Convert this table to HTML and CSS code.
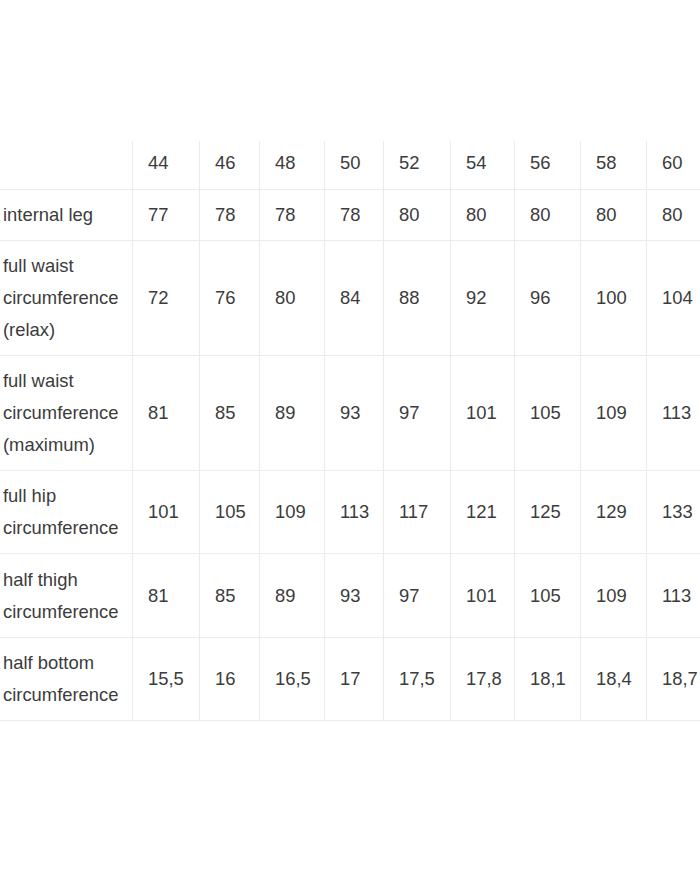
FILE: index.html
```html
<!DOCTYPE html>
<html lang="en">
<head>
<meta charset="utf-8">
<title>Size chart</title>
<link rel="stylesheet" href="styles.css">
</head>
<body>
<div class="wrap">
  <table class="size-table">
    <colgroup>
      <col class="c-label">
      <col class="c-a">
      <col class="c-b">
      <col class="c-c">
      <col class="c-d">
      <col class="c-a">
      <col class="c-e">
      <col class="c-f">
      <col class="c-f">
      <col class="c-f">
    </colgroup>
    <thead>
      <tr>
        <th class="label"></th>
        <th>44</th><th>46</th><th>48</th><th>50</th><th>52</th><th>54</th><th>56</th><th>58</th><th>60</th>
      </tr>
    </thead>
    <tbody>
      <tr>
        <td class="label">internal leg</td>
        <td>77</td><td>78</td><td>78</td><td>78</td><td>80</td><td>80</td><td>80</td><td>80</td><td>80</td>
      </tr>
      <tr>
        <td class="label">full waist circumference (relax)</td>
        <td>72</td><td>76</td><td>80</td><td>84</td><td>88</td><td>92</td><td>96</td><td>100</td><td>104</td>
      </tr>
      <tr>
        <td class="label">full waist circumference (maximum)</td>
        <td>81</td><td>85</td><td>89</td><td>93</td><td>97</td><td>101</td><td>105</td><td>109</td><td>113</td>
      </tr>
      <tr>
        <td class="label">full hip circumference</td>
        <td>101</td><td>105</td><td>109</td><td>113</td><td>117</td><td>121</td><td>125</td><td>129</td><td>133</td>
      </tr>
      <tr class="tall">
        <td class="label">half thigh circumference</td>
        <td>81</td><td>85</td><td>89</td><td>93</td><td>97</td><td>101</td><td>105</td><td>109</td><td>113</td>
      </tr>
      <tr>
        <td class="label">half bottom circumference</td>
        <td>15,5</td><td>16</td><td>16,5</td><td>17</td><td>17,5</td><td>17,8</td><td>18,1</td><td>18,4</td><td>18,7</td>
      </tr>
    </tbody>
  </table>
</div>
</body>
</html>
```

FILE: styles.css
```css
html, body {
  margin: 0;
  padding: 0;
  background: #ffffff;
}

.wrap {
  width: 700px;
  height: 869px;
  overflow: hidden;
  padding-top: 141px;
  box-sizing: border-box;
}

.size-table {
  table-layout: fixed;
  width: 713px;
  border-collapse: separate;
  border-spacing: 0;
  font-family: "Liberation Sans", Arial, sans-serif;
  font-size: 18.4px;
  line-height: 32px;
  color: #3c3c3c;
}

.c-label { width: 133px; }
.c-a { width: 67px; }
.c-b { width: 60px; }
.c-c { width: 65px; }
.c-d { width: 59px; }
.c-e { width: 64px; }
.c-f { width: 66px; }

.size-table th,
.size-table td {
  box-sizing: border-box;
  text-align: left;
  vertical-align: middle;
  font-weight: normal;
  padding: 9px 4px 9px 15px;
  border-right: 1px solid #ebebeb;
  border-bottom: 1px solid #ebebeb;
}

.size-table th {
  padding-top: 6px;
  padding-bottom: 10px;
}

.size-table .tall td {
  padding-top: 10px;
}

.size-table .label {
  padding-left: 3px;
  padding-right: 8px;
}
```
